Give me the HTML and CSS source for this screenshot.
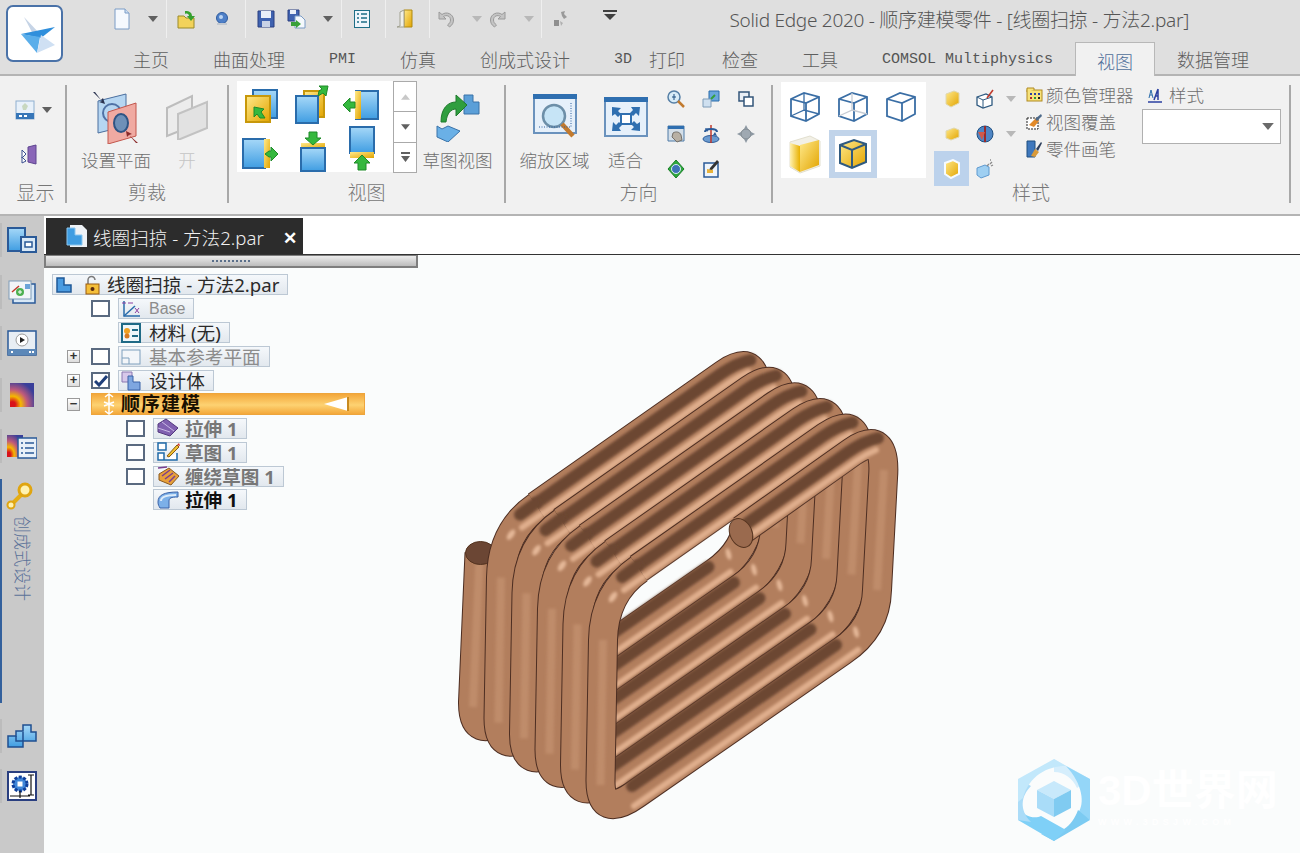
FILE: index.html
```html
<!DOCTYPE html>
<html lang="zh-CN">
<head>
<meta charset="utf-8">
<title>Solid Edge 2020</title>
<link rel="stylesheet" href="styles.css">
</head>
<body>
<svg class="defs" width="0" height="0" aria-hidden="true">
  <defs>
    <linearGradient id="gBlue" x1="0" y1="0" x2="0" y2="1"><stop offset="0" stop-color="#a6d8f8"/><stop offset="1" stop-color="#3f9de2"/></linearGradient>
    <linearGradient id="gGold" x1="0" y1="0" x2="1" y2="1"><stop offset="0" stop-color="#ffe98a"/><stop offset="1" stop-color="#e2a400"/></linearGradient>
    <linearGradient id="gGoldSide" x1="0" y1="0" x2="1" y2="0"><stop offset="0" stop-color="#fff1b0"/><stop offset="1" stop-color="#e9b100"/></linearGradient>
    <symbol id="arrow" viewBox="0 0 10 6"><path d="M0 0h10L5 6z" fill="#606060"/></symbol>
    <symbol id="arrowPale" viewBox="0 0 10 6"><path d="M0 0h10L5 6z" fill="#b8b8b8"/></symbol>
    <symbol id="wireA" viewBox="0 0 32 32"><g fill="none" stroke="#3a6ea5" stroke-width="1.800"><path d="M2 9 15 3l15 4v17l-13 7-15-5z"/><path d="M2 9l15 4 13-6M17 13v18"/><path d="M15 3v17L2 26M15 20l15 4" stroke-width="1.300"/></g></symbol>
    <symbol id="wireB" viewBox="0 0 32 32"><g fill="none" stroke="#3a6ea5" stroke-width="1.800"><path d="M2 9 15 3l15 4v17l-13 7-15-5z"/><path d="M2 9l15 4 13-6M17 13v18"/><path d="M15 3v17L2 26M15 20l15 4" stroke="#c6ccd4" stroke-width="1.300"/></g></symbol>
    <symbol id="wireC" viewBox="0 0 32 32"><g fill="none" stroke="#3a6ea5" stroke-width="1.800"><path d="M2 9 15 3l15 4v17l-13 7-15-5z"/><path d="M2 9l15 4 13-6M17 13v18"/></g></symbol>
    <path id="pFull" d="M639 569Q604 593 603 640L600.500 780Q600 820 636 794L842 651Q876 628 877 590L883 478Q887 428 852 452L664 584"/>
    <path id="pFirst" d="M607 631L600.500 780Q600 820 636 794L842 651Q876 628 877 590L883 478Q887 428 852 452L664 584"/>
    <path id="pLast" d="M639 569Q604 593 603 640L600.500 780Q600 820 636 794L842 651Q876 628 877 590L883 478Q887 428 852 452L742 530"/>
    <filter id="soft" x="-10%" y="-10%" width="120%" height="120%"><feGaussianBlur stdDeviation="1.600"/></filter>
    <g id="sides" class="tube-core" filter="url(#soft)">
      <path d="M603 640L600.500 785"/><path d="M877 590L884 470"/>
      <path class="band-dark" d="M637 566L622 577"/>
      <path class="band-light" d="M643 577L624 590"/>
      <ellipse class="glow" cx="613" cy="597" rx="3" ry="6" transform="rotate(35 613 597)"/>
    </g>
    <g id="sideStart" class="tube-core" filter="url(#soft)"><path d="M607 636L600.500 785"/><path d="M877 590L884 470"/></g>
    <g id="bandsBottom" filter="url(#soft)">
      <path class="band-dark" d="M632 786L836 645"/>
      <path class="band-light" d="M634 806L858 650"/>
      <ellipse class="glow" cx="856" cy="632" rx="2.500" ry="6" transform="rotate(-15 856 632)"/>
    </g>
    <g id="bandsTop" filter="url(#soft)">
      <path class="band-dark" d="M878 438Q864 441 848 452L664 581"/>
      <path class="band-light" d="M876 450Q866 454 856 461L670 592"/>
    </g>
    <g id="bandsTopShort" filter="url(#soft)">
      <path class="band-dark" d="M878 438Q864 441 848 452L746 524"/>
      <path class="band-light" d="M876 450Q866 454 856 461L752 534"/>
    </g>
  </defs>
</svg>

<header class="top">
  <div class="logo">
    <svg width="46" height="46" viewBox="0 0 46 46"><path d="M12 6l16 17-6 2z" fill="#c6d4e6"/><path d="M9 23l34-7-14 11z" fill="#2f8fdc"/><path d="M9 23l16 19 3-16z" fill="#5aaeea"/><path d="M25 42l18-8-14-10z" fill="#cfe0f3"/></svg>
  </div>
  <div class="top-main">
    <div class="qat">
      <span class="q"><svg width="20" height="22" viewBox="0 0 20 22"><path d="M3 1h10l4 4v16H3z" fill="#f5f9fe" stroke="#7b9cc6"/><path d="M13 1v4h4" fill="#cfe0f3" stroke="#7b9cc6"/></svg></span>
      <span class="qa g16"><svg width="10" height="6"><use href="#arrow"/></svg></span>
      <span class="qsep g8"></span>
      <span class="q g10"><svg width="20" height="20" viewBox="0 0 20 20"><path d="M1 7h6l2 2h8v10H1z" fill="#f2d25a" stroke="#9a8a2a"/><path d="M8 2c5 0 7 2 7 5h3l-4 5-4-5h2c0-2-2-3-4-2z" fill="#36a02f"/></svg></span>
      <span class="q g15"><svg width="20" height="20" viewBox="0 0 20 20"><circle cx="10" cy="9" r="5.500" fill="#4f80c8" stroke="#2f5c9e"/><circle cx="9" cy="8" r="2" fill="#bcd5f2"/><path d="M5 15h10" stroke="#c2c8d0" stroke-width="2"/></svg></span>
      <span class="qsep g13"></span>
      <span class="q g10"><svg width="20" height="20" viewBox="0 0 20 20"><path d="M2 2h16v16H2z" fill="#3f62b0" stroke="#2a3f80"/><path d="M5 2h10v7H5z" fill="#e9eef8"/><path d="M6 12h8v6H6z" fill="#c9d2e6"/></svg></span>
      <span class="q g11"><svg width="20" height="20" viewBox="0 0 20 20"><path d="M1 1h11v11H1z" fill="#3f62b0" stroke="#2a3f80"/><path d="M3 1h6v4H3z" fill="#e9eef8"/><path d="M8 7h6l4 4v8H8z" fill="#f4f8fc" stroke="#7b9cc6"/><path d="M4 13h5v-2l5 4-5 4v-2H4z" fill="#39a03a"/></svg></span>
      <span class="qa g16"><svg width="10" height="6"><use href="#arrow"/></svg></span>
      <span class="qsep g8"></span>
      <span class="q g10"><svg width="20" height="20" viewBox="0 0 20 20"><rect x="2.500" y="1.500" width="15" height="17" fill="#eef5fb" stroke="#1d6e86"/><path d="M5 5h2M9 5h6M5 9h2M9 9h6M5 13h2M9 13h6" stroke="#1d6e86" stroke-width="1.500"/></svg></span>
      <span class="qsep g13"></span>
      <span class="q g9"><svg width="20" height="22" viewBox="0 0 20 22"><path d="M9 2h8v17H9z" fill="url(#gGold)" stroke="#b08a10"/><path d="M9 2 5 4v14l-3 1h7z" fill="#efefe8" stroke="#a0a090"/></svg></span>
      <span class="qsep g14"></span>
      <span class="q g6"><svg width="20" height="20" viewBox="0 0 20 20"><path d="M3 3v7h7L7.500 7.500c3-2 7-.5 7 3.500 0 2-1 3.500-3 5l2 2c3-2 4-4.500 4-7 0-6-7-9-11.500-5.500z" fill="#c4c4c4" stroke="#9a9a9a"/></svg></span>
      <span class="qa g16"><svg width="10" height="6"><use href="#arrowPale"/></svg></span>
      <span class="q g6"><svg width="20" height="20" viewBox="0 0 20 20"><path d="M17 3v7h-7l2.500-2.500c-3-2-7-.5-7 3.500 0 2 1 3.500 3 5l-2 2c-3-2-4-4.500-4-7 0-6 7-9 11.500-5.500z" fill="#c4c4c4" stroke="#9a9a9a"/></svg></span>
      <span class="qa g16"><svg width="10" height="6"><use href="#arrowPale"/></svg></span>
      <span class="qsep g7"></span>
      <span class="q g9"><svg width="20" height="20" viewBox="0 0 20 20"><path d="M10 3l4-1-1 3 3 3-3 2-2-3z" fill="#9a9a9a"/><path d="M3 11h5v6H3z" fill="#8f8f8f"/><path d="M9 12l3 2-2 3z" fill="#b0b0b0"/></svg></span>
      <span class="qd g32"><svg width="14" height="10" viewBox="0 0 14 10"><path d="M0 0h14v2H0z" fill="#404040"/><path d="M1 4h12L7 10z" fill="#404040"/></svg></span>
      <span class="title">Solid Edge 2020 - 顺序建模零件 - [线圈扫掠 - 方法2.par]</span>
    </div>
    <nav class="tabs">
      <span class="tab">主页</span>
      <span class="tab">曲面处理</span>
      <span class="tab mono">PMI</span>
      <span class="tab">仿真</span>
      <span class="tab">创成式设计</span>
      <span class="tab tab-3d"><span class="mono-in">3D</span>打印</span>
      <span class="tab">检查</span>
      <span class="tab">工具</span>
      <span class="tab mono">COMSOL Multiphysics</span>
      <span class="tab active">视图</span>
      <span class="tab">数据管理</span>
    </nav>
  </div>
</header>

<section class="ribbon">
  <div class="group g-show">
    <div class="body show-body">
      <div class="show-row">
        <svg width="22" height="22" viewBox="0 0 22 22"><rect x="2" y="2" width="18" height="18" fill="#e8f1fa" stroke="#8fb0d0"/><path d="M2 14h18v6H2z" fill="#3676b8"/><path d="M5 16h3v2H5zM10 16h3v2h-3z" fill="#fff"/><path d="M11 4l3 3-2 4H9L8 7z" fill="#c8d8c0"/></svg>
        <svg class="ml8" width="10" height="6"><use href="#arrow"/></svg>
      </div>
      <svg class="show-2" width="22" height="22" viewBox="0 0 22 22"><path d="M10 3l8-2v19l-8-2z" fill="#8a66b8" stroke="#5e4590"/><path d="M4 6l4 4-4 4zM4 13l4 4-4 2z" fill="#fff" stroke="#3a4f8f"/></svg>
    </div>
    <div class="label show-label">显示</div>
  </div>
  <i class="sep"></i>
  <div class="group g-clip">
    <div class="body clip-body">
      <div class="bigbtn w70">
        <span class="bigicon"><svg width="48" height="54" viewBox="0 0 48 54"><path d="M6 11 34 4v32L6 43z" fill="#b6d6f2" stroke="#4a6e9e"/><circle cx="20" cy="23" r="9" fill="none" stroke="#5072a6" stroke-width="2"/><path d="M16 22 44 13v33l-28 8z" fill="#f0aaa2" stroke="#c2564c"/><ellipse cx="29" cy="33" rx="7" ry="9" fill="#6f90b8" stroke="#2f5484" stroke-width="2"/><path d="M1 2l9 9-3 1 6 2-2-6-2 2-6-8z" fill="#2a3350"/><path d="M46 53l-9-8 3-1-6-3 1 6 2-2 7 8z" fill="#8a2a2a"/></svg></span>
        <span class="btxt">设置平面</span>
      </div>
      <div class="bigbtn w50 ml11">
        <span class="bigicon"><svg width="42" height="46" viewBox="0 0 42 46"><path d="M1 14 26 2v30L1 42z" fill="#ececec" stroke="#bdbdbd" stroke-width="2"/><path d="M12 20 41 8v26L12 46z" fill="#e2e2e2" stroke="#c2c2c2" stroke-width="2"/></svg></span>
        <span class="btxt off">开</span>
      </div>
    </div>
    <div class="label">剪裁</div>
  </div>
  <i class="sep"></i>
  <div class="group g-view">
    <div class="body view-body">
      <div class="gallery-views">
        <svg width="36" height="36" viewBox="0 0 36 36"><rect x="11" y="3" width="24" height="28" fill="url(#gBlue)" stroke="#2a6cab" stroke-width="2"/><rect x="4" y="9" width="24" height="26" fill="url(#gGold)" stroke="#c8980a" stroke-width="2"/><path d="M12 20l10 2-3 3 4 6h-5l-3-4-3 3z" fill="#35b83e" stroke="#1e8a28"/></svg>
        <svg width="40" height="40" viewBox="0 0 40 40"><rect x="12" y="6" width="20" height="26" fill="url(#gGold)" stroke="#c8980a" stroke-width="2"/><rect x="4" y="11" width="22" height="27" fill="url(#gBlue)" stroke="#2a6cab" stroke-width="2"/><path d="M36 1l-2 10-3-3-5 3 1-5 3-2-3-3z" fill="#35b83e" stroke="#1e8a28"/></svg>
        <svg width="38" height="36" viewBox="0 0 38 36"><rect x="14" y="4" width="22" height="28" fill="url(#gBlue)" stroke="#2a6cab" stroke-width="2"/><rect x="13" y="4" width="6" height="28" fill="url(#gGold)"/><path d="M1 18l7-7v4h5v6H8v4z" fill="#35b83e" stroke="#1e8a28"/></svg>
        <svg class="row2" width="38" height="36" viewBox="0 0 38 36"><rect x="2" y="3" width="22" height="29" fill="url(#gBlue)" stroke="#2a6cab" stroke-width="2"/><rect x="23" y="3" width="6" height="29" fill="url(#gGold)"/><path d="M37 18l-7-7v4h-2l-4 3 4 3h2v4z" fill="#35b83e" stroke="#1e8a28"/></svg>
        <svg class="row2" width="36" height="42" viewBox="0 0 36 42"><rect x="7" y="13" width="24" height="6" fill="url(#gGold)"/><rect x="7" y="18" width="24" height="23" fill="url(#gBlue)" stroke="#2a6cab" stroke-width="2"/><path d="M19 15l-8-7h4V2h8v6h4z" fill="#35b83e" stroke="#1e8a28"/></svg>
        <svg class="row2" width="36" height="46" viewBox="0 0 36 46"><rect x="7" y="1" width="24" height="26" fill="url(#gBlue)" stroke="#2a6cab" stroke-width="2"/><rect x="7" y="26" width="24" height="6" fill="url(#gGold)"/><path d="M19 29l8 8h-4v7h-8v-7h-4z" fill="#35b83e" stroke="#1e8a28"/></svg>
      </div>
      <div class="scroll">
        <span class="sbtn"><svg width="9" height="6" viewBox="0 0 10 6"><path d="M0 6h10L5 0z" fill="#c8c8c8"/></svg></span>
        <span class="sbtn"><svg width="9" height="6"><use href="#arrow"/></svg></span>
        <span class="sbtn"><svg width="9" height="10" viewBox="0 0 9 10"><path d="M0 0h9v2H0zM0 4h9L4.500 10z" fill="#606060"/></svg></span>
      </div>
      <div class="bigbtn w71 ml5">
        <span class="bigicon"><svg width="46" height="50" viewBox="0 0 46 50"><path d="M29 3h9v7h6v12H29z" fill="#5b9fd8" stroke="#3a72a8"/><path d="M2 34l5 3 6-3 12 5-12 11-11-5z" fill="#6ab0e6" stroke="#3a72a8"/><path d="M6 30C6 16 13 10 21 10V3l11 10-11 11v-7c-5 0-9 4-10 13z" fill="#2f9e3f" stroke="#1e7a2c"/></svg></span>
        <span class="btxt">草图视图</span>
      </div>
    </div>
    <div class="label">视图</div>
  </div>
  <i class="sep"></i>
  <div class="group g-dir">
    <div class="body dir-body">
      <div class="bigbtn w71">
        <span class="bigicon"><svg width="46" height="48" viewBox="0 0 46 48"><rect x="2" y="2" width="42" height="38" fill="#e6f0fa" stroke="#6a92bd" stroke-width="2"/><path d="M1 1h44v5H1z" fill="#2f6fb0"/><circle cx="22" cy="23" r="11" fill="#c6e4f6" stroke="#6d8fa8" stroke-width="2.500"/><path d="M30 31l11 12" stroke="#c27a2e" stroke-width="4.500"/><path d="M7 34h32V9" fill="none" stroke="#2f5f9e" stroke-dasharray="1 1.500"/></svg></span>
        <span class="btxt">缩放区域</span>
      </div>
      <div class="bigbtn w35 ml18">
        <span class="bigicon"><svg width="44" height="40" viewBox="0 0 44 40"><rect x="1" y="1" width="42" height="38" fill="#e6f0fa" stroke="#6a92bd" stroke-width="2"/><path d="M0 0h44v5H0z" fill="#2f6fb0"/><rect x="17" y="17" width="10" height="10" fill="#fff" stroke="#2f6fb0" stroke-width="2"/><path d="M8 10l9 1-3 3 3 3-3 3-3-3-3 2zM36 10l-1 9-3-3-3 3-3-3 3-3-2-3zM8 34l1-9 3 3 3-3 3 3-3 3 2 3zM36 34l-9-1 3-3-3-3 3-3 3 3 3-2z" fill="#2f6fb0"/></svg></span>
        <span class="btxt">适合</span>
      </div>
      <div class="small-grid">
        <svg width="20" height="20" viewBox="0 0 20 20"><circle cx="8" cy="8" r="6" fill="#d8ecf8" stroke="#557fa6" stroke-width="1.500"/><path d="M8 5v6M6 8h4" stroke="#1f4f80"/><path d="M12 12l6 6" stroke="#c27a2e" stroke-width="2.500"/></svg>
        <svg width="20" height="20" viewBox="0 0 20 20"><path d="M8 2h10v10H8z" fill="#6aa7dc" stroke="#2a6cab"/><path d="M2 10h8v8H2z" fill="#cfe0f0" stroke="#7f9cb8"/><path d="M10 10l4-4" stroke="#35a03a" stroke-width="2"/></svg>
        <svg width="20" height="20" viewBox="0 0 20 20"><path d="M3 3h10v9H3z" fill="#e9eff6" stroke="#33557a" stroke-width="1.500"/><path d="M8 8h9v9H8z" fill="#fff" stroke="#33557a" stroke-width="1.500"/></svg>
        <svg width="20" height="20" viewBox="0 0 20 20"><path d="M2 2h16v15H2z" fill="#d4dfe9" stroke="#4f7ba6"/><path d="M2 2h16v3H2z" fill="#2f6fb0"/><path d="M7 9c3-2 7-1 8 2l1 5-5 2-5-5z" fill="#b8b0a4" stroke="#74706a"/></svg>
        <svg width="20" height="20" viewBox="0 0 20 20"><ellipse cx="10" cy="15" rx="8" ry="3.500" fill="#6b9bd0" stroke="#2a5a98"/><path d="M10 1v18" stroke="#c0392b" stroke-width="1.500"/><path d="M4 8c0-4 12-4 12 0" fill="none" stroke="#2a5a98" stroke-width="2"/><path d="M4 4l4 1-2 3zM16 12l-4-1 2-3z" fill="#2a5a98"/></svg>
        <svg width="20" height="20" viewBox="0 0 20 20"><circle cx="10" cy="10" r="5" fill="#9fa9b2" stroke="#7a848c"/><path d="M10 1l2 4H8zM10 19l2-4H8zM1 10l4-2v4zM19 10l-4-2v4z" fill="#8d98a2"/></svg>
        <svg width="20" height="20" viewBox="0 0 20 20"><path d="M10 1l8 9-8 9-8-9z" fill="#2fa83c" stroke="#1a7f2a"/><circle cx="10" cy="10" r="4.500" fill="#3e73b8" stroke="#d9eaf7"/></svg>
        <svg width="20" height="20" viewBox="0 0 20 20"><path d="M3 4h14v14H3z" fill="#eef4fb" stroke="#2a5a98" stroke-width="1.500"/><path d="M16 1l2 2-7 8-3 1 1-3z" fill="#333"/><path d="M6 10l6 1v3H6z" fill="#e8b23a"/></svg>
      </div>
    </div>
    <div class="label">方向</div>
  </div>
  <i class="sep"></i>
  <div class="group g-style">
    <div class="body style-body">
      <div class="gallery-cubes">
        <span class="cell"><svg width="32" height="32"><use href="#wireA"/></svg></span>
        <span class="cell"><svg width="32" height="32"><use href="#wireB"/></svg></span>
        <span class="cell"><svg width="32" height="32"><use href="#wireC"/></svg></span>
        <span class="cell"><svg width="34" height="40" viewBox="0 0 34 40"><path d="M2 8 22 2l10 5v25l-20 7-10-6z" fill="#f2f0e6" stroke="#e2dfcf"/><path d="M12 11l19-5v25l-19 7z" fill="url(#gGold)"/><path d="M2 9l10 3v26l-10-6z" fill="url(#gGoldSide)"/></svg></span>
        <span class="cell selected"><span class="cell-in"><svg width="30" height="32" viewBox="0 0 30 32"><path d="M2 7 16 2l12 4v18l-14 6-12-5z" fill="url(#gGold)" stroke="#2f5a80" stroke-width="2"/><path d="M2 7l12 5 14-6M14 12v18" fill="none" stroke="#2f5a80" stroke-width="2"/></svg></span></span>
      </div>
      <div class="style-grid">
        <span class="sc"><svg width="16" height="18" viewBox="0 0 16 18"><path d="M2 4l8-3 5 2v10l-8 4-5-3z" fill="url(#gGold)" stroke="#e0d8b0"/></svg></span>
        <span class="sc"><svg width="20" height="20" viewBox="0 0 20 20"><path d="M2 8l9-3 6 3v8l-9 3-6-3z" fill="#fff" stroke="#2f5a80" stroke-width="1.300"/><path d="M2 8l6 3 9-3M8 11v8" fill="none" stroke="#2f5a80"/><path d="M12 9l6-8" stroke="#c0392b" stroke-width="1.500"/></svg></span>
        <span class="sc"><svg width="10" height="6"><use href="#arrowPale"/></svg></span>
        <span class="sc"><svg width="16" height="14" viewBox="0 0 16 14"><path d="M2 4l8-3 5 2v7l-8 3-5-2z" fill="url(#gGold)" stroke="#e0d8b0"/></svg></span>
        <span class="sc"><svg width="20" height="20" viewBox="0 0 20 20"><circle cx="10" cy="10" r="8" fill="#4f86c4" stroke="#1f4f80"/><path d="M10 2v16" stroke="#9a2a2a" stroke-width="2"/><path d="M3 8h7l-3 8" fill="#d05a4a"/></svg></span>
        <span class="sc"><svg width="10" height="6"><use href="#arrowPale"/></svg></span>
        <span class="sc selected-sm"><svg width="18" height="20" viewBox="0 0 18 20"><path d="M2 4l8-3 6 3v11l-8 4-6-4z" fill="url(#gGold)" stroke="#f6fbff" stroke-width="2"/></svg></span>
        <span class="sc"><svg width="20" height="20" viewBox="0 0 20 20"><path d="M2 9l8-3 4 2v8l-8 3-4-3z" fill="#9ecff2" stroke="#5f9ad0"/><path d="M12 7l2-2M15 5l2-2M16 7l2-1M15 1h1" stroke="#8a8a8a" stroke-width="1.300"/></svg></span>
      </div>
      <div class="style-links">
        <span class="link"><svg width="17" height="15" viewBox="0 0 17 15"><rect x="1" y="3" width="15" height="11" fill="#f7e27a" stroke="#b08a20"/><path d="M1 5V1h7v2" fill="#f7e27a" stroke="#b08a20"/><path d="M4 6h2v2H4zM8 6h2v2H8zM12 6h2v2h-2z" fill="#2a3fa0"/><path d="M4 10h2v2H4z" fill="#b02a2a"/><path d="M8 10h2v2H8z" fill="#2a9a3a"/><path d="M12 10h2v2h-2z" fill="#222"/></svg>颜色管理器</span>
        <span class="link"><svg width="17" height="17" viewBox="0 0 17 17"><rect x="1" y="5" width="11" height="11" fill="#fff" stroke="#222" stroke-dasharray="2 1"/><path d="M3 12l7-7 3 3-5 6z" fill="#e28a2a"/><path d="M9 6l6-5 1 2-5 5z" fill="#4d6a8a"/></svg>视图覆盖</span>
        <span class="link"><svg width="17" height="18" viewBox="0 0 17 18"><path d="M1 1h8v16H1z" fill="#3f78bd" stroke="#1f4f80"/><path d="M5 16l4-7 4 3-4 5z" fill="#d99a3a"/><path d="M10 9l5-7 1 1-4 8z" fill="#2d3f5c"/></svg>零件画笔</span>
      </div>
      <div class="style-box">
        <span class="link"><svg class="aa" width="16" height="16" viewBox="0 0 16 16"><path d="M1 15h14" stroke="#2a3fa0" stroke-width="1.500"/><path d="M4 3 2 11M4 3l2 8M3 8h2" stroke="#2a6cab" fill="none"/><path d="M11 2l-4 11M11 2v11M8.500 9h3" stroke="#2a3fa0" stroke-width="1.500" fill="none"/></svg>样式</span>
        <div class="combo"><svg width="14" height="7" viewBox="0 0 10 6"><path d="M0 0h10L5 6z" fill="#6a6a6a"/></svg></div>
      </div>
    </div>
    <div class="label">样式</div>
  </div>
  <i class="sep"></i>
</section>

<main class="work">
  <aside class="rail">
    <span class="rbtn"><svg width="30" height="26" viewBox="0 0 30 26"><rect x="1" y="1" width="17" height="23" fill="url(#gBlue)" stroke="#2a5a98" stroke-width="2"/><rect x="14" y="10" width="15" height="15" fill="#d8e8f6" stroke="#2a5a98" stroke-width="2"/><rect x="18" y="15" width="7" height="5" fill="#fff" stroke="#2a5a98" stroke-width="1.500"/></svg></span>
    <span class="rbtn"><svg width="28" height="24" viewBox="0 0 28 24"><rect x="5" y="4" width="22" height="19" fill="#d8e8f6" stroke="#2a5a98" stroke-width="1.500"/><rect x="1" y="1" width="22" height="18" fill="#f2f5f8" stroke="#7f9cb8"/><path d="M4 12l7-6" stroke="#c0392b" stroke-width="1.500"/><circle cx="12" cy="12" r="4" fill="#4cb050"/><path d="M10 12h4M12 10v4" stroke="#fff"/><rect x="17" y="4" width="5" height="5" fill="#6ba3d8"/></svg></span>
    <span class="rbtn"><svg width="30" height="26" viewBox="0 0 30 26"><rect x="1" y="1" width="28" height="24" fill="#e8eef4" stroke="#2a5a98" stroke-width="1.500"/><path d="M1 19h28v6H1z" fill="#5c88b8"/><circle cx="15" cy="10" r="6" fill="#fff" stroke="#9a9a9a"/><path d="M13 7l5 3-5 3z" fill="#222"/><path d="M4 21h2v2H4zM22 21h2v2h-2zM25 21h2v2h-2z" fill="#fff"/></svg></span>
    <span class="rbtn"><svg width="24" height="24" viewBox="0 0 24 24"><defs><radialGradient id="heat" cx=".1" cy=".9" r="1"><stop offset=".12" stop-color="#d8121a"/><stop offset=".35" stop-color="#f5b800"/><stop offset=".62" stop-color="#c05a7a"/><stop offset="1" stop-color="#3a3f9a"/></radialGradient></defs><rect width="24" height="24" fill="url(#heat)"/></svg></span>
    <span class="rbtn"><svg width="30" height="26" viewBox="0 0 30 26"><rect x="0" y="2" width="16" height="22" fill="url(#heat)"/><rect x="11" y="5" width="19" height="20" fill="#e8f0f8" stroke="#2a5a98" stroke-width="1.500"/><path d="M14 10h2M18 10h9M14 15h2M18 15h9M14 20h2M18 20h9" stroke="#2a5a98" stroke-width="1.500"/></svg></span>
    <div class="rail-active">
      <svg class="key" width="28" height="28" viewBox="0 0 28 28"><path d="M5 23 17 11" stroke="#e4ad16" stroke-width="4"/><circle cx="19" cy="8" r="6" fill="#fff2b0" stroke="#e0a510" stroke-width="3"/><circle cx="5" cy="23" r="3.500" fill="#fff2b0" stroke="#e0a510" stroke-width="2"/></svg>
      <span class="vtext">创成式设计</span>
    </div>
    <span class="rbtn lower"><svg width="30" height="26" viewBox="0 0 30 26"><path d="M1 13h8V8h7V2h8v7h5v9H16v6H1z" fill="url(#gBlue)" stroke="#1f4f90" stroke-width="1.500"/><path d="M9 13v5h7M16 9v9" fill="none" stroke="#1f4f90" stroke-width="1.500"/></svg></span>
    <span class="rbtn lower"><svg width="30" height="30" viewBox="0 0 30 30"><rect x="1" y="1" width="28" height="28" fill="#fff" stroke="#2a3f80" stroke-width="2"/><circle cx="13" cy="13" r="7" fill="#3f86d8" stroke="#0f3f9a" stroke-width="3" stroke-dasharray="3 1.500"/><rect x="10.500" y="10.500" width="5" height="5" fill="#fff"/><path d="M3 25h20M13 20v7M24 4v20M21 4h6M21 24h6" stroke="#111" stroke-width="1.200"/></svg></span>
  </aside>
  <div class="doc">
    <div class="doc-tabs">
      <div class="doc-tab">
        <svg width="22" height="24" viewBox="0 0 22 24"><path d="M4 1h12l5 5v17H4z" fill="#eef2f6"/><path d="M1 4h8v7h7v10H1z" fill="#3f9de2" stroke="#8cc6ee"/></svg>
        <span class="doc-name">线圈扫掠 - 方法2.par</span>
        <span class="doc-x">✕</span>
      </div>
    </div>
    <div class="canvas">
      <div class="grip"><span class="dots"></span></div>
      <ul class="tree">
        <li class="row root"><span class="node">
          <svg width="16" height="16" viewBox="0 0 16 16"><path d="M1 1h7v7h7v7H1z" fill="#4a9be0" stroke="#1f5a98" stroke-width="1.500"/></svg>
          <svg class="ml11" width="18" height="20" viewBox="0 0 18 20"><path d="M5 9V5a3.500 3.500 0 0 1 7 0" fill="none" stroke="#7a7a7a" stroke-width="1.500"/><rect x="3" y="9" width="13" height="10" fill="#f5bf3a" stroke="#9a5a10"/><circle cx="9.500" cy="14" r="2" fill="#5a2a10"/></svg>
          <span class="t dark ml6">线圈扫掠 - 方法2.par</span></span></li>
        <li class="row lvl1"><span class="exp none"></span><span class="chk"></span><span class="node">
          <svg width="20" height="20" viewBox="0 0 20 20"><path d="M3 2v15h16" fill="none" stroke="#2a6cab" stroke-width="1.500"/><path d="M3 17 14 7" stroke="#2a6cab" stroke-width="1.500"/><path d="M1 4h4M7 4h5M14 9l4 5M18 9l-4 5" stroke="#8a3fa0"/></svg>
          <span class="t grey base">Base</span></span></li>
        <li class="row lvl1"><span class="exp none"></span><span class="chk none"></span><span class="node">
          <svg width="20" height="20" viewBox="0 0 20 20"><rect x="1" y="1" width="18" height="18" fill="#eef6fa" stroke="#1f6a86" stroke-width="2"/><circle cx="6" cy="8" r="3" fill="#f0a020"/><circle cx="6" cy="13" r="2.500" fill="#d87a20"/><path d="M11 7h6M11 13h6" stroke="#1f6a86" stroke-width="2"/></svg>
          <span class="t dark">材料 (无)</span></span></li>
        <li class="row lvl1"><span class="exp">+</span><span class="chk"></span><span class="node">
          <svg width="20" height="20" viewBox="0 0 20 20"><rect x="1" y="3" width="18" height="14" fill="#f3f6f9" stroke="#7fa0bd"/><path d="M1 11h7v6" fill="none" stroke="#7fa0bd"/></svg>
          <span class="t grey">基本参考平面</span></span></li>
        <li class="row lvl1"><span class="exp">+</span><span class="chk on"><svg width="14" height="12" viewBox="0 0 14 12"><path d="M1 6l4 4 8-9" fill="none" stroke="#1f3f7a" stroke-width="3"/></svg></span><span class="node">
          <svg width="20" height="20" viewBox="0 0 20 20"><path d="M1 1h10v10H1z" fill="#d7c8ea" stroke="#8a78b0"/><path d="M7 5h5v6h7v8H7z" fill="#7ea6e0" stroke="#3a62a8"/></svg>
          <span class="t dark">设计体</span></span></li>
        <li class="row lvl1 seq"><span class="exp">−</span>
          <div class="seqbar">
            <svg width="12" height="22" viewBox="0 0 12 22"><path d="M6 1v20M2 4l4-3 4 3M2 18l4 3 4-3M1 9l5 2 5-2M1 13l5-2 5 2" fill="none" stroke="#fff" stroke-width="1.500"/></svg>
            <span class="seq-t">顺序建模</span>
            <svg class="seq-arrow" width="26" height="16" viewBox="0 0 26 16"><path d="M0 8 24 1v14z" fill="#fff"/><path d="M24 1v14" stroke="#c88a20" stroke-width="2"/></svg>
          </div></li>
        <li class="row lvl2"><span class="chk"></span><span class="node">
          <svg width="24" height="20" viewBox="0 0 24 20"><path d="M2 6 10 1l12 9-8 8-12-4z" fill="#8060b0" stroke="#53387e"/><path d="M2 10l12 4M6 4l12 9" stroke="#c9b8e4"/></svg>
          <span class="t bold">拉伸 1</span></span></li>
        <li class="row lvl2"><span class="chk"></span><span class="node">
          <svg width="24" height="20" viewBox="0 0 24 20"><rect x="2" y="1" width="8" height="7" fill="#fff" stroke="#1f6aa8" stroke-width="1.500"/><path d="M2 11h6v7H2zM8 18h13v-7" fill="#fff" stroke="#1f6aa8" stroke-width="1.500"/><path d="M11 14 21 3l2 2-10 10z" fill="#f0c030" stroke="#8a5a10"/><path d="M21 3l2-2 1 3z" fill="#d03020"/></svg>
          <span class="t bold">草图 1</span></span></li>
        <li class="row lvl2"><span class="chk"></span><span class="node">
          <svg width="24" height="22" viewBox="0 0 24 22"><path d="M3 9 13 3l10 8-8 9-12-5z" fill="#e8a03a" stroke="#8a5a20"/><path d="M2 3l9-1M6 11l8-6M9 14l8-6M13 17l6-6" stroke="#7a3f90" stroke-width="1.500"/></svg>
          <span class="t bold">缠绕草图 1</span></span></li>
        <li class="row lvl2"><span class="chk none"></span><span class="node">
          <svg width="24" height="20" viewBox="0 0 24 20"><path d="M2 12C2 5 8 2 22 2v5c-7 0-9 1-9 4v7H4c-1-2-2-3-2-6z" fill="#7cb0e8" stroke="#3a62a8"/><path d="M5 11c0-4 6-6 15-6" stroke="#dcebfa" stroke-width="2" fill="none"/></svg>
          <span class="t black">拉伸 1</span></span></li>
      </ul>

      <svg class="coil" width="480" height="510" viewBox="440 330 480 510">
        <g transform="translate(-127.5 -78)">
          <use href="#pFirst" class="tube-edge"/><use href="#pFirst" class="tube-base"/><use href="#sideStart"/><use href="#bandsBottom"/><use href="#bandsTop"/>
          <ellipse cx="608" cy="631" rx="15" ry="11.500" fill="#6b4634" stroke="#54331f"/>
        </g>
        <g transform="translate(-102 -62.400)"><use href="#pFull" class="tube-edge"/><use href="#pFull" class="tube-base"/><use href="#sides"/><use href="#bandsBottom"/><use href="#bandsTop"/></g>
        <g transform="translate(-76.500 -46.800)"><use href="#pFull" class="tube-edge"/><use href="#pFull" class="tube-base"/><use href="#sides"/><use href="#bandsBottom"/><use href="#bandsTop"/></g>
        <g transform="translate(-51 -31.200)"><use href="#pFull" class="tube-edge"/><use href="#pFull" class="tube-base"/><use href="#sides"/><use href="#bandsBottom"/><use href="#bandsTop"/></g>
        <g transform="translate(-25.500 -15.600)"><use href="#pFull" class="tube-edge"/><use href="#pFull" class="tube-base"/><use href="#sides"/><use href="#bandsBottom"/><use href="#bandsTop"/></g>
        <g>
          <use href="#pLast" class="tube-edge"/><use href="#pLast" class="tube-base"/><use href="#sides"/><use href="#bandsBottom"/><use href="#bandsTopShort"/>
          <ellipse cx="741" cy="533" rx="11" ry="15" transform="rotate(-25 741 533)" fill="#9a6a4e" stroke="#54331f"/>
        </g>
      </svg>

      <div class="mark">
        <svg width="74" height="84" viewBox="0 0 74 84">
          <path d="M37 1 73 21 60 30C56 21 48 14 37 14z" fill="#d5eefc"/>
          <path d="M49 8 73 21V62L61 55C68 46 66 26 49 8z" fill="#94d6f8"/>
          <path d="M73 62 37 83 24 76C38 78 54 72 61 52z" fill="#7ccbf2"/>
          <path d="M37 83 1 62V47C8 62 20 60 24 58L49 72z" fill="#7fd0f7"/>
          <path d="M1 62V21L14 28C4 38 2 52 14 64z" fill="#abdcf8"/>
          <path d="M1 21 37 1 49 8C30 8 12 18 6 40L1 44z" fill="#c2e8fb"/>
          <path d="M37 23 54 32 37 41 20 32z" fill="#c8e9fb"/><path d="M20 32 37 41V59L20 50z" fill="#a9dcf8"/><path d="M54 32V50L37 59V41z" fill="#80cbf1"/>
        </svg>
        <div class="mark-t"><b>3D世界网</b><small>WWW.3DSJW.COM</small></div>
      </div>
    </div>
  </div>
</main>
</body>
</html>
```

FILE: styles.css
```css
* { box-sizing: border-box; }
html, body { height: 100%; }
body {
  margin: 0;
  width: 1300px;
  height: 853px;
  overflow: hidden;
  display: flex;
  flex-direction: column;
  background: #f0f0f0;
  font-family: "Noto Sans CJK SC", "Noto Sans", sans-serif;
  color: #666;
}
svg { display: block; flex: none; }
.defs { position: absolute; }

/* top */
.top { height: 76px; display: flex; background: #dfdfdf; border-bottom: 2px solid #b4b4b4; flex: none; }
.logo {
  width: 57px; height: 57px; margin: 5px 0 0 6px;
  background: #fff; border: 2px solid #4a72a8; border-radius: 7px;
  display: flex; align-items: center; justify-content: center;
}
.top-main { flex: 1; display: flex; flex-direction: column; min-width: 0; }
.qat { height: 42px; padding: 0 0 4px 49px; display: flex; align-items: center; }
.q { width: 20px; height: 22px; display: flex; align-items: center; justify-content: center; }
.qa { width: 10px; display: flex; justify-content: center; }
.qsep { width: 1px; height: 38px; background: #efefef; }
.qd { width: 14px; margin-top: -8px; }
.g6 { margin-left: 6px; } .g7 { margin-left: 7px; } .g8 { margin-left: 8px; } .g9 { margin-left: 9px; }
.g10 { margin-left: 10px; } .g11 { margin-left: 11px; } .g13 { margin-left: 13px; } .g14 { margin-left: 14px; }
.g15 { margin-left: 15px; } .g16 { margin-left: 16px; } .g32 { margin-left: 32px; }
.title {
  margin-left: auto; padding-right: 111px; white-space: nowrap;
  font-family: "Noto Sans", "Noto Sans CJK SC", sans-serif;
  font-size: 19px; font-weight: 300; color: #555; letter-spacing: -0.28px;
}
.tabs { height: 32px; display: flex; align-items: stretch; padding-left: 48px; }
.tab {
  padding: 2px 22px 0; display: flex; align-items: center;
  font-size: 18px; font-weight: 300; color: #5e5e5e; white-space: nowrap; line-height: 1;
}
.tab.mono { font-family: "Liberation Mono", "Noto Sans CJK SC", monospace; font-size: 15px; color: #555; }
.tab-3d { padding-right: 15px; }
.mono-in { font-family: "Liberation Mono", monospace; font-size: 15px; margin-right: 17px; color: #555; }
.tab.active {
  background: #f1f1f1; border: 1px solid #b8b8b8; border-bottom: none;
  margin-bottom: -2px; padding: 2px 21px 0; color: #4f6f9a; z-index: 1;
}

/* ribbon */
.ribbon {
  height: 140px; flex: none; display: flex; align-items: flex-start;
  padding-top: 5px; background: #f1f1f1; border-bottom: 2px solid #b4b4b4;
}
.group { height: 124px; display: flex; flex-direction: column; flex: none; }
.body { height: 100px; display: flex; }
.label { height: 24px; line-height: 22px; text-align: center; font-size: 19px; font-weight: 300; color: #777; }
.show-label { padding-left: 6px; }
.sep { width: 2px; height: 118px; margin-top: 4px; background: #a8a8a8; flex: none; }
.g-show { width: 65px; } .g-clip { width: 160px; } .g-view { width: 275px; } .g-dir { width: 265px; } .g-style { width: 516px; }
.show-body { flex-direction: column; padding: 18px 0 0 14px; }
.show-row { display: flex; align-items: center; }
.show-2 { margin: 23px 0 0 4px; }
.ml5 { margin-left: 5px; } .ml6 { margin-left: 6px; } .ml8 { margin-left: 6px; } .ml11 { margin-left: 11px; } .ml18 { margin-left: 18px; }
.clip-body { padding-left: 14px; }
.view-body { padding-left: 8px; }
.dir-body { padding-left: 13px; }
.style-body { padding-left: 8px; }
.bigbtn { display: flex; flex-direction: column; align-items: center; padding-top: 3px; }
.w70 { width: 70px; } .w50 { width: 50px; } .w71 { width: 71px; } .w35 { width: 35px; }
.bigicon { height: 65px; display: flex; align-items: center; justify-content: center; }
.btxt { height: 22px; line-height: 22px; font-size: 17.500px; font-weight: 300; color: #6e6e6e; white-space: nowrap; }
.btxt.off { color: #c4c4c4; }
.gallery-views {
  width: 156px; height: 91px; background: #fff;
  display: grid; grid-template-columns: 46px 58px 40px; grid-template-rows: 47px 44px;
  justify-items: center; align-items: center;
}
.gallery-views .row2 { align-self: end; }
.scroll { width: 24px; height: 92px; display: flex; flex-direction: column; border: 1px solid #aaa; background: #fff; }
.sbtn { flex: 1; display: flex; align-items: center; justify-content: center; border-bottom: 1px solid #aaa; }
.sbtn:last-child { border-bottom: none; }
.small-grid { margin-left: 15px; display: grid; grid-template-columns: repeat(3, 35px); grid-template-rows: repeat(3, 35px); justify-items: center; align-items: center; }
.gallery-cubes {
  width: 145px; height: 96px; margin-top: 1px; background: #fff;
  display: grid; grid-template-columns: repeat(3, 48px); grid-template-rows: repeat(2, 48px);
}
.cell { display: flex; align-items: center; justify-content: center; }
.cell.selected { background: #c1d4ea; padding: 6px; }
.cell-in { width: 100%; height: 100%; background: #fff; display: flex; align-items: center; justify-content: center; }
.style-grid {
  margin-left: 8px; width: 87px;
  display: grid; grid-template-columns: 35px 32px 20px; grid-template-rows: repeat(3, 35px);
  justify-items: center; align-items: center;
}
.sc { width: 100%; height: 100%; display: flex; align-items: center; justify-content: center; }
.selected-sm { background: #bcd2ec; }
.style-links { width: 116px; margin-left: 5px; display: flex; flex-direction: column; }
.link { height: 27px; display: flex; align-items: center; gap: 3px; font-size: 17.500px; font-weight: 300; color: #6e6e6e; white-space: nowrap; }
.style-box { width: 140px; display: flex; flex-direction: column; margin-left: -1px; padding-left: 1px; }
.aa { margin: 0 3px 0 5px; }
.combo { height: 35px; margin-top: 1px; background: #fff; border: 1px solid #b0b0b0; display: flex; align-items: center; justify-content: flex-end; padding-right: 5px; }

/* work area */
.work { flex: 1; display: flex; min-height: 0; }
.rail { width: 44px; flex: none; background: #c9c9c9; display: flex; flex-direction: column; padding-top: 7px; gap: 17.500px; }
.rbtn { height: 34px; display: flex; align-items: center; justify-content: center; padding-right: 3px; border-left: 2px solid #bcbcbc; }
.rail-active {
  height: 224px; margin-top: -2px; border-left: 2px solid #33609c;
  display: flex; flex-direction: column; align-items: center; padding-top: 3px;
}
.key { margin-right: 6px; }
.vtext { writing-mode: vertical-rl; text-orientation: sideways; margin-top: 6px; font-size: 17px; font-weight: 300; color: #5b7299; line-height: 20px; white-space: nowrap; }
.rbtn.lower { margin-top: -1.500px; }
.doc { flex: 1; display: flex; flex-direction: column; min-width: 0; }
.doc-tabs { height: 39px; flex: none; background: #fff; border-bottom: 1px solid #333; padding: 2px 0 0 2px; }
.doc-tab { width: 257px; height: 36px; background: #2c2c2c; display: flex; align-items: center; padding-left: 20px; color: #eee; }
.doc-name { margin-left: 5px; font-family: "Noto Sans", "Noto Sans CJK SC", sans-serif; font-size: 18.600px; font-weight: 300; color: #f0f0f0; white-space: nowrap; }
.doc-x { margin-left: auto; margin-right: 3px; font-size: 17px; font-weight: 700; color: #fff; width: 17px; line-height: 1; }
.canvas { flex: 1; position: relative; background: #fafcfc; overflow: hidden; }
.grip { width: 374px; height: 13px; border: 2px solid #7e7e7e; border-top-width: 1px; background: linear-gradient(#ececec, #bcbcbc); display: flex; justify-content: center; align-items: center; }
.dots { width: 38px; height: 2px; background: repeating-linear-gradient(90deg, #5a6f8a 0 2px, transparent 2px 4px); }
.tree { list-style: none; margin: 5px 0 0; padding: 0; }
.row { height: 23.900px; display: flex; align-items: center; }
.root { padding-left: 8px; }
.lvl1 { padding-left: 23px; }
.lvl2 { padding-left: 82px; }
.node {
  display: inline-flex; align-items: center; height: 21px; padding: 0 8px 0 2px; gap: 8px;
  background: linear-gradient(#f5f8fb, #e2e8ee); border: 1px solid #bcc8d4; white-space: nowrap;
}
.lvl2 .node { gap: 5px; }
.root .node { padding-left: 3px; gap: 0; }
.t { font-family: "Noto Sans", "Noto Sans CJK SC", sans-serif; font-size: 18.600px; line-height: 21px; font-weight: 400; }
.dark { color: #2a2a2a; font-weight: 400; }
.grey { color: #8c8c8c; font-weight: 400; }
.base { font-family: "Liberation Sans", sans-serif; font-size: 16px; }
.bold { color: #777; font-weight: 700; }
.black { color: #111; font-weight: 700; }
.exp { width: 13px; height: 13px; margin-right: 11px; border: 1px solid #9a9a9a; background: linear-gradient(#fff, #ddd); font: 700 13px/10px "Liberation Sans", sans-serif; color: #333; text-align: center; flex: none; }
.exp.none { visibility: hidden; }
.chk { width: 19px; height: 17px; margin-right: 8px; background: #fff; border: 2px solid #5a6a80; flex: none; display: flex; align-items: center; justify-content: center; }
.chk.none { visibility: hidden; }
.seqbar {
  width: 274px; height: 22px; margin-left: 0; display: flex; align-items: center; padding-left: 11px; position: relative;
  background: linear-gradient(#f3a73a, #fdd272 55%, #f3a83a);
  border: 1px solid #eda53c;
}
.seq-t { margin-left: 6px; font-family: "Noto Sans", "Noto Sans CJK SC", sans-serif; font-size: 19px; line-height: 20px; letter-spacing: 1px; font-weight: 700; color: #1a1000; }
.seq-arrow { position: absolute; right: 14px; top: 2px; }

/* coil */
.coil { position: absolute; left: 396px; top: 75px; }
.tube-edge, .tube-base, .tube-core path, .band-dark, .band-light { fill: none; stroke-linejoin: round; }
.tube-edge, .tube-base { stroke-linecap: butt; }
.tube-edge { stroke: #4d2e22; stroke-width: 30; }
.tube-base { stroke: #b27e5d; stroke-width: 28; }
.tube-core path { stroke: #bf8c6a; stroke-width: 8; }
.tube-core path.band-dark, .band-dark { stroke: #6c4631; stroke-width: 12; stroke-linecap: round; }
.tube-core path.band-light, .band-light { stroke: #e0af8d; stroke-width: 6; stroke-linecap: round; }
.glow { fill: #f3c7a8; opacity: .8; }

/* watermark */
.mark { position: absolute; left: 973px; top: 503px; display: flex; gap: 7px; }
.mark-t { display: flex; flex-direction: column; padding-top: 8px; color: #fff; }
.mark-t b { font-size: 42px; line-height: 50px; font-family: "Liberation Sans", "Noto Sans CJK SC", sans-serif; white-space: nowrap; }
.mark-t small { font: 700 9px/12px "Liberation Sans", sans-serif; letter-spacing: 4.300px; white-space: nowrap; }
```
